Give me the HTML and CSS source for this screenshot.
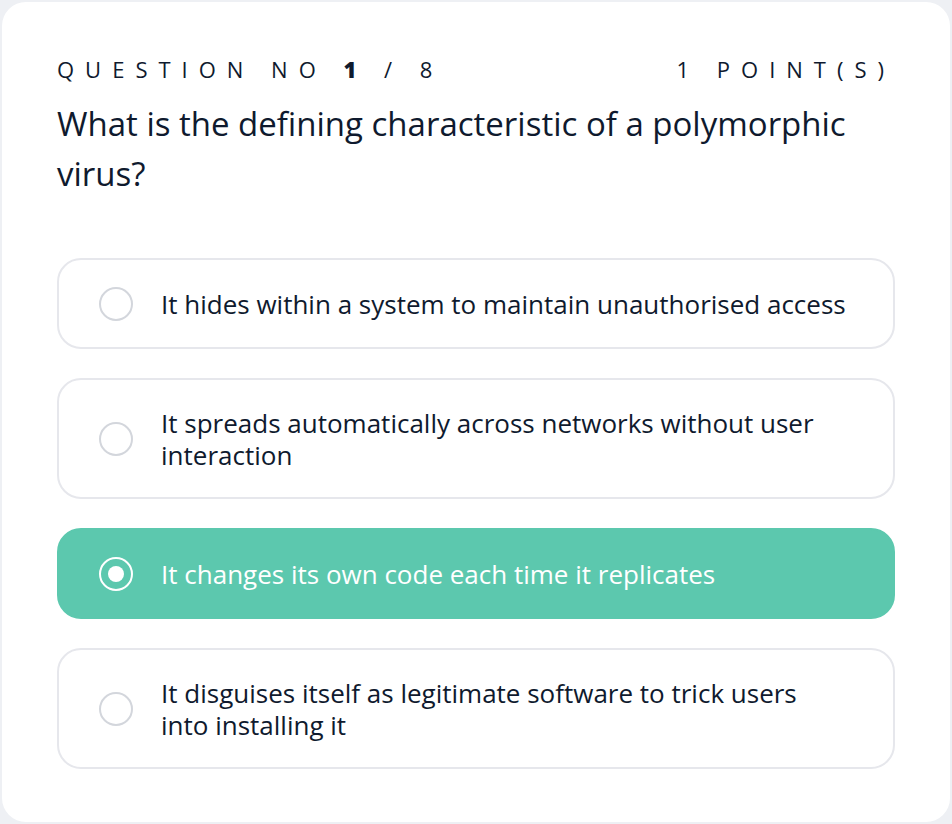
FILE: index.html
```html
<!DOCTYPE html>
<html lang="en">

<head>
    <meta charset="UTF-8">
    <meta name="viewport" content="width=device-width, initial-scale=1.0">
    <title>Quiz</title>
    <link rel="stylesheet" href="styles.css">
</head>

<body>
    <div class="card">
        <div class="quiz-header">
            <span class="label">Question No <b>1</b> / 8</span>
            <span class="label">1 Point(s)</span>
        </div>
        <h2 class="question">What is the defining characteristic of a polymorphic virus?</h2>

        <ul class="options">
            <li class="option">
                <span class="radio"></span>
                <span class="option-text">It hides within a system to maintain unauthorised access</span>
            </li>
            <li class="option">
                <span class="radio"></span>
                <span class="option-text">It spreads automatically across networks without user interaction</span>
            </li>
            <li class="option selected">
                <span class="radio"></span>
                <span class="option-text">It changes its own code each time it replicates</span>
            </li>
            <li class="option">
                <span class="radio"></span>
                <span class="option-text">It disguises itself as legitimate software to trick users into installing it</span>
            </li>
        </ul>
    </div>
</body>

</html>
```

FILE: styles.css
```css
* {
    box-sizing: border-box;
}

body {
    margin: 0;
    padding: 2px;
    background-color: #eef0f4;
    font-family: "Open Sans", "Noto Sans", sans-serif;
    color: #0f1a2e;
}

.card {
    height: 820px;
    background: white;
    border-radius: 24px;
    padding: 53px 55px 0;
}

.quiz-header {
    display: flex;
    justify-content: space-between;
    align-items: center;
}

.label {
    font-size: 22px;
    line-height: 28px;
    letter-spacing: 0.5em;
    text-transform: uppercase;
}

.label b {
    font-weight: 800;
}

.question {
    font-size: 33px;
    font-weight: 400;
    line-height: 50px;
    margin: 16px 0 0;
}

.options {
    list-style: none;
    padding: 0;
    margin: 59px 0 0;
    display: flex;
    flex-direction: column;
    gap: 29px;
}

.option {
    display: flex;
    align-items: center;
    gap: 28px;
    padding: 27px 40px 26px;
    border: 2px solid #e6e7ec;
    border-radius: 24px;
    font-size: 26px;
    line-height: 32px;
}

.option-text {
    max-width: 687px;
}

.radio {
    flex: none;
    width: 34px;
    height: 34px;
    border: 2px solid #d3d6dc;
    border-radius: 50%;
    display: flex;
    align-items: center;
    justify-content: center;
}

.option.selected {
    background-color: #5cc8ae;
    border-color: #5cc8ae;
    color: white;
}

.option.selected .radio {
    border-color: white;
}

.option.selected .radio::after {
    content: "";
    width: 16px;
    height: 16px;
    border-radius: 50%;
    background: white;
}
```
